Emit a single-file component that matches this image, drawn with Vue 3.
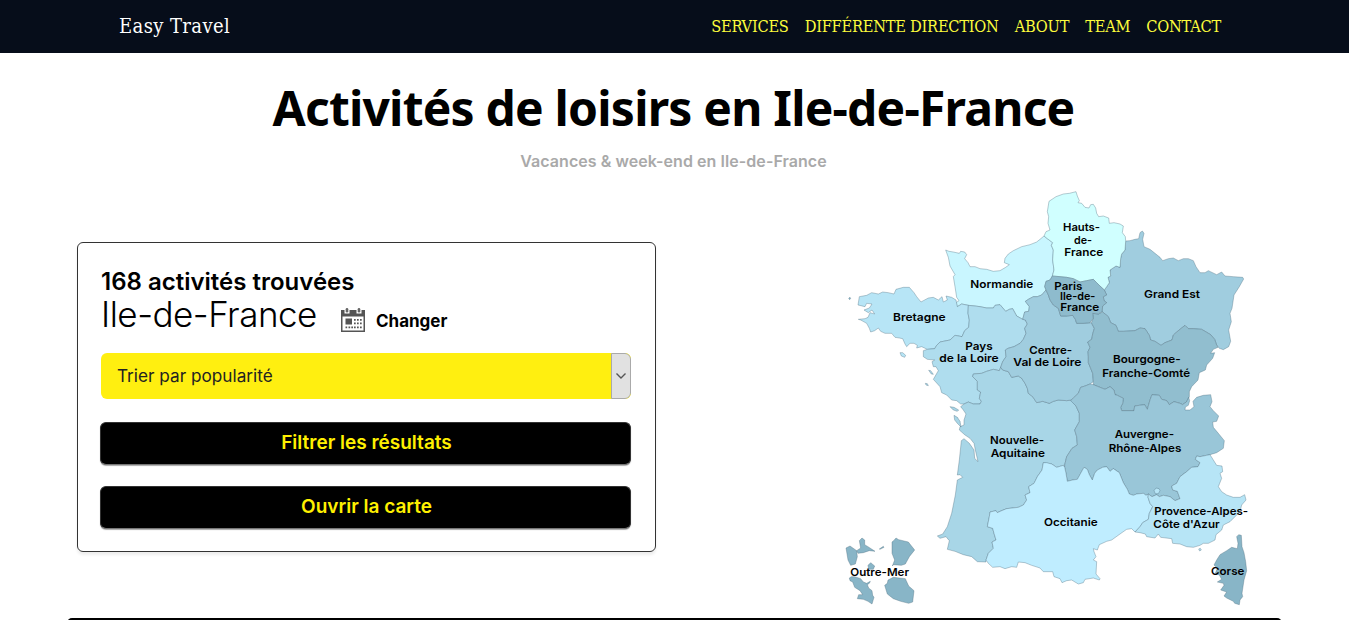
<script setup>
const navLinks = ['Services', 'Différente direction', 'About', 'Team', 'Contact']

// Coordinates are in a 3x grid of the displayed map.
const regions = [
  { name: 'normandie', fill: '#c9f6ff', points: '317,210 327,214 340,216 358,220 362,214 374,216 380,224 374,236 384,248 390,260 405,260 420,266 440,268 460,274 480,272 497,262 508,254 493,248 495,235 505,222 520,212 545,200 570,194 590,186 600,178 612,168 622,176 638,188 634,196 640,210 638,240 642,270 637,288 630,300 618,304 614,320 618,330 605,345 592,350 580,350 565,358 556,364 568,380 566,394 554,396 548,418 530,408 518,386 508,388 497,394 480,374 465,376 460,384 440,384 420,380 405,378 385,376 365,372 352,380 348,368 357,362 350,352 345,320 340,290 345,284 330,258 325,232' },
  { name: 'bretagne', fill: '#b7e5f6', points: '348,360 335,352 318,348 322,360 310,366 306,350 295,360 280,352 265,354 250,362 243,366 230,350 222,338 208,322 190,322 168,328 162,342 145,338 128,336 115,342 95,338 80,346 58,350 54,375 75,380 80,370 96,372 88,384 72,390 85,398 96,390 104,402 90,398 84,412 75,416 55,418 62,420 80,430 88,445 92,456 104,452 115,444 122,454 135,460 155,460 165,472 178,474 188,476 195,492 200,500 210,490 222,490 232,496 230,504 245,500 262,508 284,506 290,496 300,486 330,480 345,466 366,470 374,452 386,442 388,420 384,400 385,376 365,372 352,380' },
  { name: 'pays', fill: '#afddee', points: '385,376 405,378 420,380 440,384 460,384 465,376 480,374 497,394 508,388 518,386 530,408 548,418 556,420 562,432 554,445 558,460 550,478 540,490 522,500 504,505 496,510 498,530 488,545 482,562 478,572 460,568 440,574 425,580 400,582 398,590 412,604 412,630 422,636 418,655 424,664 420,672 400,672 385,666 372,672 362,672 350,662 335,660 320,645 305,638 300,620 280,598 295,572 288,560 280,560 276,545 284,540 262,538 250,530 250,512 262,508 284,506 290,496 300,486 330,480 345,466 366,470 374,452 386,442 388,420 384,400' },
  { name: 'aquitaine', fill: '#a8d6e7', points: '482,562 478,572 460,568 440,574 425,580 400,582 398,590 412,604 412,630 422,636 418,655 424,664 420,672 400,672 385,666 372,672 362,680 370,690 378,702 372,720 372,735 360,740 358,750 375,765 390,775 402,790 406,810 414,845 404,835 402,810 388,790 372,776 364,782 358,840 352,885 360,884 368,892 352,900 346,945 335,1000 322,1040 308,1062 292,1068 300,1075 318,1070 328,1082 322,1108 345,1114 370,1124 395,1130 412,1145 438,1146 438,1140 445,1120 460,1105 456,1086 468,1080 462,1060 458,1045 442,1040 448,1010 450,996 468,992 472,998 485,992 500,986 535,982 550,975 560,960 555,945 570,938 566,920 582,910 592,890 606,870 610,848 635,852 650,862 670,856 674,862 674,855 680,830 696,805 712,795 710,770 704,750 718,725 718,700 708,678 694,660 680,662 655,660 640,664 628,670 608,664 590,668 578,650 565,640 562,625 555,610 545,595 535,588 515,592 505,575 488,570' },
  { name: 'centre', fill: '#a0cddf', points: '605,345 592,350 580,350 565,358 556,364 568,380 566,394 554,396 548,418 556,420 562,432 554,445 558,460 550,478 540,490 522,500 504,505 496,510 498,530 488,545 482,562 488,570 505,575 515,592 535,588 545,595 555,610 562,625 565,640 578,650 590,668 608,664 628,670 640,664 655,660 680,662 694,660 700,654 715,640 722,622 735,618 750,612 760,605 758,580 752,565 745,548 745,530 744,515 750,502 743,486 755,478 758,462 763,445 754,428 730,430 710,430 706,418 698,406 680,408 662,408 655,385 640,375 630,360 625,345 618,330' },
  { name: 'grand-est', fill: '#a0cddf', points: '857,183 870,182 885,178 896,176 900,158 907,153 912,160 908,178 912,200 930,208 945,220 960,232 968,242 985,236 1000,234 1015,242 1030,236 1045,236 1060,242 1068,260 1080,278 1095,278 1105,272 1130,284 1145,276 1155,288 1180,290 1208,292 1211,297 1198,320 1182,345 1176,385 1170,400 1174,425 1166,450 1172,484 1166,500 1150,509 1138,505 1130,495 1124,478 1112,464 1085,448 1060,446 1045,446 1035,436 1015,452 1000,465 996,480 975,488 963,496 945,484 932,480 928,466 915,446 900,444 885,452 850,454 835,454 828,436 812,428 805,410 788,396 786,395 788,378 800,368 792,362 790,350 800,345 793,330 800,320 808,308 804,292 812,288 810,270 828,258 840,262 842,235 845,222 855,210' },
  { name: 'hauts', fill: '#d0ffff', points: '627,64 648,50 670,42 688,40 708,35 712,48 718,62 714,68 725,70 735,82 747,84 752,74 760,73 767,84 770,100 776,110 790,108 806,114 808,130 822,128 840,132 850,138 847,158 856,170 857,183 855,210 845,222 842,235 840,262 828,258 810,270 812,288 804,292 808,308 800,320 793,330 780,318 770,308 760,298 740,302 720,306 700,296 680,292 660,290 637,288 642,270 638,240 640,210 634,196 638,188 622,176 612,168 618,155 630,150 624,130 626,110 622,95' },
  { name: 'bourgogne', fill: '#91becf', points: '788,396 805,410 812,428 828,436 835,454 850,454 885,452 900,444 915,446 928,466 932,480 945,484 963,496 975,488 996,480 1000,465 1015,452 1035,436 1045,446 1060,446 1085,448 1112,464 1124,478 1130,495 1134,502 1120,508 1112,520 1124,518 1118,535 1100,555 1096,570 1078,578 1074,600 1055,620 1048,635 1048,650 1040,665 1028,674 1020,670 1002,665 988,674 980,662 965,658 958,646 936,644 930,660 922,688 914,674 898,676 884,678 882,692 845,692 842,682 848,670 850,655 832,646 825,644 822,630 810,620 795,628 780,622 760,614 760,605 758,580 752,565 745,548 745,530 744,515 750,502 743,486 755,478 758,462 763,445 754,428 760,415 758,400 775,402' },
  { name: 'idf', fill: '#8ebbcd', points: '637,288 660,290 680,292 700,296 720,306 740,302 760,298 770,308 780,318 793,330 800,345 790,350 792,362 800,368 788,378 786,395 775,402 758,400 760,415 750,428 730,430 710,430 706,418 698,406 680,408 662,408 655,385 640,375 630,360 625,345 618,330 614,320 618,304 630,300' },
  { name: 'auvergne', fill: '#99c6d8', points: '760,614 780,622 795,628 810,620 822,630 825,644 832,646 850,655 848,670 842,682 845,692 882,692 884,678 898,676 914,674 922,688 930,660 936,644 958,646 965,658 980,662 988,674 1002,665 1020,670 1028,674 1040,665 1046,652 1049,662 1045,676 1036,681 1035,690 1050,690 1062,680 1059,664 1070,652 1090,646 1112,644 1116,665 1110,680 1120,692 1136,708 1130,724 1118,726 1120,742 1135,760 1153,782 1150,805 1130,818 1110,824 1100,826 1080,830 1070,828 1066,838 1080,848 1074,860 1055,862 1040,875 1020,890 1010,910 995,918 998,930 1012,934 1020,956 1005,962 990,950 970,946 958,950 950,944 936,950 925,942 918,946 910,940 890,942 880,946 868,942 862,928 850,908 838,878 820,866 810,874 800,860 788,862 772,870 764,880 757,900 748,884 742,868 732,862 722,880 712,898 698,900 682,904 678,880 674,862 674,855 680,830 696,805 712,795 710,770 704,750 718,725 718,700 708,678 692,662 700,654 715,640 722,622 735,618 750,612' },
  { name: 'occitanie', fill: '#bfedff', points: '674,862 670,856 650,862 635,852 620,848 610,848 606,870 592,890 582,910 566,920 570,938 555,945 560,960 550,975 535,982 500,986 485,992 472,998 468,992 450,996 448,1010 442,1040 458,1045 462,1060 468,1080 456,1086 460,1105 445,1120 438,1140 445,1150 458,1162 480,1160 495,1166 515,1160 530,1162 535,1146 555,1148 575,1156 600,1164 610,1175 638,1175 642,1190 660,1196 666,1208 680,1202 695,1200 715,1212 730,1208 735,1198 760,1194 778,1200 780,1196 768,1182 770,1145 760,1140 768,1130 762,1115 760,1106 772,1110 778,1094 800,1084 815,1080 840,1062 860,1048 875,1046 885,1056 900,1040 908,1028 925,1018 928,1000 938,980 930,970 924,952 925,942 918,946 910,940 890,942 880,946 868,942 862,928 850,908 838,878 820,866 810,874 800,860 788,862 772,870 764,880 757,900 748,884 742,868 732,862 722,880 712,898 698,900 682,904 678,880' },
  { name: 'paca', fill: '#b7e5f6', points: '885,1056 900,1058 916,1062 920,1070 945,1074 955,1062 962,1072 995,1076 998,1090 1020,1092 1040,1100 1060,1102 1080,1096 1090,1090 1105,1090 1125,1080 1128,1064 1145,1050 1150,1035 1170,1025 1190,1005 1200,995 1205,975 1218,960 1214,944 1200,952 1180,952 1160,945 1145,935 1135,920 1145,895 1140,880 1148,875 1146,858 1130,856 1120,840 1110,824 1100,826 1080,830 1070,828 1066,838 1080,848 1074,860 1055,862 1040,875 1020,890 1010,910 995,918 998,930 1012,934 1020,956 1005,962 990,950 970,946 958,950 950,944 936,950 925,942 924,952 930,970 938,980 928,1000 925,1018 908,1028 900,1040' },
  { name: 'vaucluse', fill: '#b7e5f6', points: '942,932 948,924 957,926 960,932 955,941 946,941' },
  { name: 'corse', fill: '#88b5c7', points: '1196,1064 1204,1066 1206,1100 1212,1118 1217,1145 1220,1172 1212,1200 1206,1240 1208,1250 1200,1260 1198,1274 1184,1270 1180,1264 1160,1254 1152,1248 1160,1236 1142,1230 1152,1216 1150,1210 1132,1206 1145,1198 1138,1185 1126,1180 1132,1165 1122,1155 1130,1140 1140,1124 1160,1112 1175,1102 1192,1106 1194,1090 1190,1070' },
  { name: 'mayotte', fill: '#88b5c7', points: '18,1104 30,1098 50,1112 52,1130 46,1152 32,1156 24,1140' },
  { name: 'guadeloupe', fill: '#88b5c7', points: '58,1082 66,1074 74,1080 74,1094 84,1100 105,1114 88,1112 70,1118 54,1120 50,1112 62,1104' },
  { name: 'desirade', fill: '#88b5c7', points: '118,1107 130,1099 132,1102 120,1108' },
  { name: 'guyane', fill: '#88b5c7', points: '156,1086 163,1080 168,1074 176,1079 205,1086 224,1110 208,1130 196,1152 184,1156 160,1154 157,1158 164,1140 160,1130 156,1120' },
  { name: 'marie-galante', fill: '#88b5c7', points: '84,1156 92,1148 104,1158 100,1168 86,1168' },
  { name: 'martinique', fill: '#88b5c7', points: '28,1194 34,1190 44,1190 62,1196 70,1206 80,1210 91,1204 88,1210 82,1214 86,1224 96,1232 98,1246 102,1252 96,1272 84,1264 70,1258 52,1256 56,1244 68,1244 60,1232 44,1222 38,1206 30,1202' },
  { name: 'reunion', fill: '#88b5c7', points: '134,1216 142,1210 144,1200 160,1192 196,1196 206,1218 222,1232 218,1266 206,1270 182,1264 160,1256 142,1242' },
  { name: 'ouessant', fill: '#88b5c7', points: '26,355 30,352 32,355 29,359' },
  { name: 'belle-ile', fill: '#b7e5f6', points: '180,518 188,518 197,526 194,532 184,528' },
  { name: 'noirmoutier', fill: '#afddee', points: '266,571 272,572 280,583 274,582' },
  { name: 'yeu', fill: '#afddee', points: '256,610 262,611 265,617 258,615' },
  { name: 're', fill: '#a8d6e7', points: '330,680 342,682 356,690 352,694 340,690' },
  { name: 'oleron', fill: '#a8d6e7', points: '342,706 352,712 360,724 363,741 352,730 344,720' },
  { name: 'hyeres', fill: '#b7e5f6', points: '1076,1107 1081,1105 1084,1110 1079,1113' }
]

// x is the left edge of the text, w its drawn width.
const labels = [
  { t: 'Hauts-', x: 669, y: 152, w: 111 },
  { t: 'de-', x: 702, y: 192, w: 54 },
  { t: 'France', x: 673, y: 228, w: 117 },
  { t: 'Normandie', x: 391, y: 323, w: 189 },
  { t: 'Paris', x: 643, y: 329, w: 84 },
  { t: 'Ile-de-', x: 660, y: 361, w: 106 },
  { t: 'France', x: 661, y: 394, w: 117 },
  { t: 'Grand Est', x: 912, y: 354, w: 168 },
  { t: 'Bretagne', x: 159, y: 423, w: 158 },
  { t: 'Pays', x: 376, y: 509, w: 82 },
  { t: 'de la Loire', x: 298, y: 547, w: 178 },
  { t: 'Centre-', x: 568, y: 521, w: 128 },
  { t: 'Val de Loire', x: 520, y: 558, w: 204 },
  { t: 'Bourgogne-', x: 819, y: 548, w: 203 },
  { t: 'Franche-Comté', x: 787, y: 591, w: 263 },
  { t: 'Nouvelle-', x: 450, y: 792, w: 162 },
  { t: 'Aquitaine', x: 452, y: 832, w: 163 },
  { t: 'Auvergne-', x: 824, y: 774, w: 178 },
  { t: 'Rhône-Alpes', x: 806, y: 816, w: 218 },
  { t: 'Occitanie', x: 612, y: 1038, w: 161 },
  { t: 'Provence-Alpes-', x: 943, y: 1005, w: 281 },
  { t: "Côte d'Azur", x: 940, y: 1043, w: 199 },
  { t: 'Outre-Mer', x: 31, y: 1187, w: 176 },
  { t: 'Corse', x: 1113, y: 1185, w: 100 }
]
</script>

<template>
  <div class="page">
    <header class="navbar">
      <a class="brand">Easy Travel</a>
      <nav class="links">
        <a v-for="link in navLinks" :key="link">{{ link }}</a>
      </nav>
    </header>

    <section class="intro">
      <h1>Activités de loisirs en Ile-de-France</h1>
      <p>Vacances &amp; week-end en Ile-de-France</p>
    </section>

    <main class="content">
      <section class="panel">
        <h2>168 activités trouvées</h2>
        <div class="place">
          <span class="place-name">Ile-de-France</span>
          <svg class="calendar" width="24" height="24" viewBox="0 0 24 24">
            <path fill="#555" fill-rule="evenodd" d="M0 2h24v22H0zM1.500 8.500v14h21v-14z" />
            <path fill="#fff" d="M3.500 0h5v5.500h-5zM15.500 0h5v5.500h-5z" />
            <rect x="4.700" y="0" width="2.600" height="4.500" rx="1.300" fill="#666" />
            <rect x="16.700" y="0" width="2.600" height="4.500" rx="1.300" fill="#666" />
            <path fill="#555" d="M4.500 10.500h6.500v6H4.500zM13 11h1.700v1.700H13zM16 11h1.700v1.700H16zM19 11h1.700v1.700H19zM13 14.500h1.700v1.700H13zM16 14.500h1.700v1.700H16zM19 14.500h1.700v1.700H19zM4.500 18.500h1.700v1.700H4.500zM7.500 18.500h1.700v1.700H7.500zM10.300 18.500h1.700v1.700h-1.700zM13 18.500h1.700v1.700H13zM16 18.500h1.700v1.700H16zM19 18.500h1.700v1.700H19z" />
          </svg>
          <a class="change">Changer</a>
        </div>
        <div class="select">
          <span>Trier par popularité</span>
          <i class="arrow">
            <svg width="12" height="8" viewBox="0 0 12 8"><path d="M1.500 1.500 6 6l4.500-4.500" fill="none" stroke="#555" stroke-width="1.400" /></svg>
          </i>
        </div>
        <button class="filter">Filtrer les résultats</button>
        <button class="open-map">Ouvrir la carte</button>
      </section>

      <svg class="map" width="420" height="430" viewBox="0 0 1260 1290">
        <polygon v-for="r in regions" :key="r.name" :points="r.points" :fill="r.fill" />
        <text v-for="(l, i) in labels" :key="i" :x="l.x" :y="l.y" :textLength="l.w" lengthAdjust="spacingAndGlyphs">{{ l.t }}</text>
      </svg>
    </main>

    <div class="next-block"></div>
  </div>
</template>

<style>
body { background: #fff; overflow: hidden; }
</style>

<style scoped>
.page { height: 620px; overflow: hidden; display: flex; flex-direction: column; color: #000; font-family: Inter, "Open Sans", sans-serif; }
.navbar { flex: none; box-sizing: border-box; height: 53px; padding: 0 128px 1px 119px; display: flex; align-items: center; justify-content: space-between; background: #060d1a; font-family: "DejaVu Serif Condensed", "DejaVu Serif", serif; font-stretch: condensed; }
.brand { color: #fff; font-size: 20px; letter-spacing: 0.4px; }
.links { display: flex; gap: 16px; color: #fcfc3c; font-size: 16.300px; text-transform: uppercase; letter-spacing: -0.25px; }
.intro { flex: none; height: 127px; text-align: center; }
h1 { margin: 22px 2px 0 0; font: 700 48px/66px "Noto Sans", sans-serif; letter-spacing: -0.8px; white-space: nowrap; }
.intro p { margin: 10px 2px 0 0; font-size: 16px; line-height: 20px; font-weight: 600; letter-spacing: 0.06px; color: #a9a9a9; }
.content { flex: none; height: 438px; display: flex; justify-content: space-between; padding: 0 89px 0 77px; }
.panel { box-sizing: border-box; width: 579px; height: 310px; margin-top: 62px; padding: 24px 24px 0 23px; border: 1.500px solid #333; border-radius: 6px; box-shadow: 0 3px 3px #eee; display: flex; flex-direction: column; }
h2 { margin: 0; font-size: 24px; line-height: 29px; font-weight: 600; }
.place { height: 38px; display: flex; align-items: flex-start; }
.place-name { width: 240px; font-size: 35px; line-height: 37px; font-weight: 300; letter-spacing: -0.5px; white-space: nowrap; }
.calendar { margin-top: 12px; }
.change { margin: 15px 0 0 11px; font-size: 17px; line-height: 20px; font-weight: 700; }
.select { box-sizing: border-box; flex: none; height: 46px; margin-top: 19px; display: flex; align-items: center; justify-content: space-between; padding-left: 16px; border-radius: 6px; overflow: hidden; background: #ffef10; font-size: 17.200px; color: #222; }
.select span { padding-bottom: 2px; }
.arrow { box-sizing: border-box; width: 20px; height: 46px; display: flex; align-items: center; justify-content: center; background: #e1e1e1; border: 1px solid #aaa; border-radius: 0 6px 6px 0; }
button { flex: none; height: 43px; margin: 23px 0 0 -1px; padding: 0 0 3px 2px; border: 1px solid #333; border-bottom-color: #777; border-radius: 6px; background: #000; color: #fff000; font: 600 19px Inter, sans-serif; box-shadow: 0 1px 1px #aaa; }
.open-map { margin-top: 21px; }
.map { display: block; }
.map polygon { stroke: #466577; stroke-opacity: 0.4; stroke-width: 2.600; stroke-linejoin: round; }
.map text { font: 600 32.500px Inter, sans-serif; fill: #000; }
.next-block { flex: none; height: 40px; margin: 0 67px; border-radius: 5px; background: #000; }
</style>
